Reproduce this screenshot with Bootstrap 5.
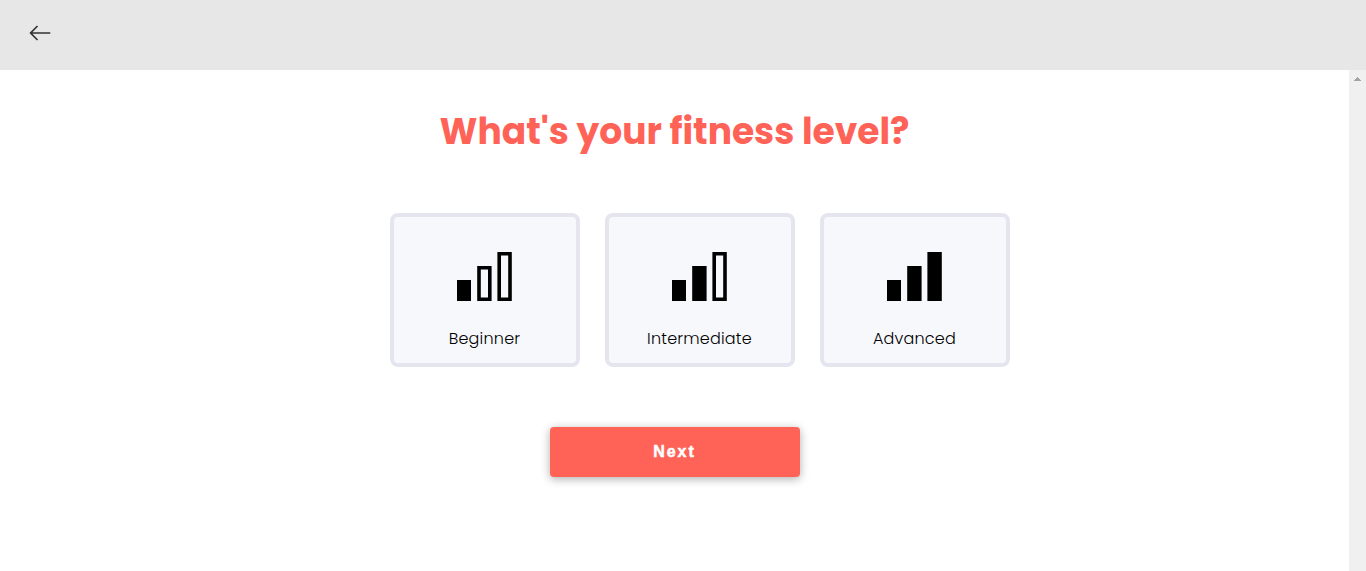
<!DOCTYPE html>
<html lang="en">
<head>
<meta charset="utf-8">
<meta name="viewport" content="width=device-width, initial-scale=1">
<title>Fitness level</title>
<link href="https://cdn.jsdelivr.net/npm/bootstrap@5.3.0/dist/css/bootstrap.min.css" rel="stylesheet">
<style>
  body { font-family: Poppins, Inter, sans-serif; height: 571px; overflow: hidden; }
  .topbar { height: 70px; background: #e7e7e7; padding: 22px 0 0 29px; }
  .title { color: #ff6257; font-size: 36px; line-height: 56px; padding-top: 34px; }
  .levels { gap: 25px; margin: 53px 0 0 50px; }
  .level { width: 190px; height: 154px; background: #f7f8fc; border: 4px solid #e4e5ee; border-radius: 8px; color: #000; padding-top: 35px; }
  .level-name { font-size: 16px; line-height: 24px; font-weight: 300; letter-spacing: .2px; margin-top: 26px; }
  .next { width: 250px; height: 50px; margin-top: 60px; background: #ff6257; color: #fff; border: 0; border-radius: 4px; font: bold 16px/24px "Liberation Sans", Arial, sans-serif; letter-spacing: 2px; -webkit-text-stroke: .5px #fff; box-shadow: 0 2px 10px rgba(0,0,0,.32); }
  .next:hover { background: #ee5549; color: #fff; }
  .track { width: 17px; background: #f0f0f0; padding-top: 7px; }
</style>
</head>
<body class="d-flex flex-column">
<header class="topbar flex-shrink-0">
  <svg class="d-block" width="22" height="22" viewBox="0 0 22 22" fill="none" stroke="#333" stroke-width="1.7" aria-label="Back"><path d="M21.3 11H1.7M8.5 4L1.6 11L8.5 18"/></svg>
</header>
<div class="d-flex flex-grow-1">
  <main class="flex-grow-1 d-flex flex-column align-items-center">
    <h1 class="title fw-bold mb-0">What's your fitness level?</h1>
    <div class="levels d-flex">
      <div class="level d-flex flex-column align-items-center">
        <svg width="55" height="49" viewBox="0 0 55 49"><path d="M0 28h14v21H0z"/><path fill="none" stroke="#000" stroke-width="3.6" d="M22 15.8h10.8v31.4H22zM42.2 1.8H53v45.4H42.2z"/></svg>
        <span class="level-name" id="beginner">Beginner</span>
      </div>
      <div class="level d-flex flex-column align-items-center">
        <svg width="55" height="49" viewBox="0 0 55 49"><path d="M0 28h14v21H0zM20.2 14h14.4v35H20.2z"/><path fill="none" stroke="#000" stroke-width="3.6" d="M42.2 1.8H53v45.4H42.2z"/></svg>
        <span class="level-name" id="intermediate">Intermediate</span>
      </div>
      <div class="level d-flex flex-column align-items-center">
        <svg width="55" height="49" viewBox="0 0 55 49"><path d="M0 28h14v21H0zM20.2 14h14.4v35H20.2zM40.4 0h14.4v49H40.4z"/></svg>
        <span class="level-name" id="advanced">Advanced</span>
      </div>
    </div>
    <button class="next btn" type="button">Next</button>
  </main>
  <div class="track d-flex justify-content-center flex-shrink-0">
    <svg width="7" height="4" viewBox="0 0 7 4" fill="#a3a3a3" shape-rendering="crispEdges"><path d="M3 0h1v1h1v1h1v1h1v1H0V3h1V2h1V1h1z"/></svg>
  </div>
</div>
<script src="https://cdn.jsdelivr.net/npm/bootstrap@5.3.0/dist/js/bootstrap.bundle.min.js"></script>
</body>
</html>
